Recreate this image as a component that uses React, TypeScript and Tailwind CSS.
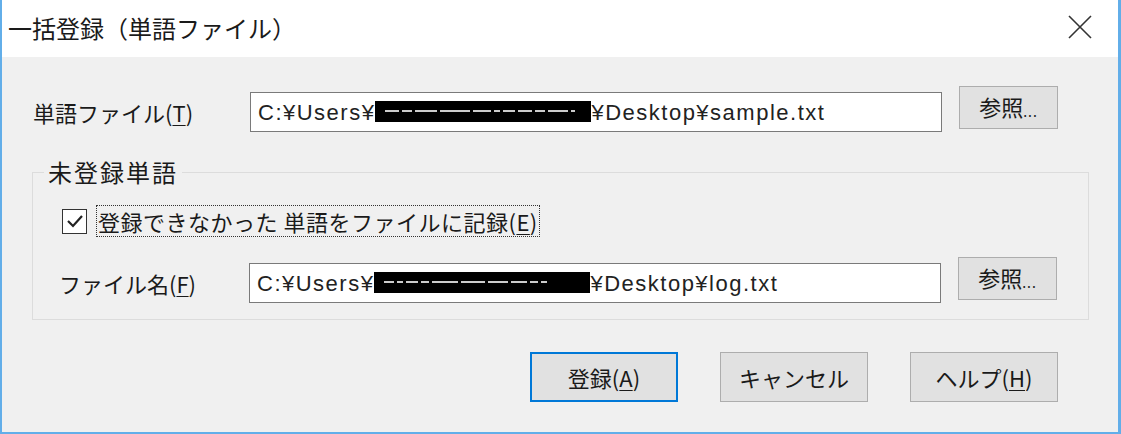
import type { ReactNode } from "react";

const jp = { fontFamily: '"Noto Sans CJK JP", "Noto Sans", sans-serif' };
const path = { fontFamily: '"Liberation Sans", Arial, sans-serif' };

// redacted user name — a black bar with faint white marks
const Redacted = ({ marks }: { marks: number[] }) => (
  <span className="inline-flex items-center gap-[3px] w-[216px] h-[21px] bg-black px-[10px] align-middle -mt-[2px]">
    {marks.map((w, i) => (
      <span key={i} className="h-[2px] bg-white/80" style={{ width: w }} />
    ))}
  </span>
);

const Mn = ({ children }: { children: ReactNode }) => (
  <span className="underline underline-offset-[3px] decoration-1">{children}</span>
);

const PathInput = ({ tail, marks }: { tail: string; marks: number[] }) => (
  <div
    className="w-[692px] h-[40px] mt-[6px] bg-white border border-[#7a7a7a] flex items-center pl-[7px] text-[22px] tracking-[1.5px] text-[#222] whitespace-nowrap overflow-hidden"
    style={path}
  >
    C:¥Users¥
    <Redacted marks={marks} />
    {tail}
  </div>
);

const BrowseButton = () => (
  <button className="w-[99px] h-[43px] ml-[17px] bg-[#e1e1e1] border border-[#adadad] text-[22px] text-[#1a1a1a] flex items-center justify-center pb-[2px]">
    参照<span className="text-[14px] tracking-[1px] mt-[10px]">...</span>
  </button>
);

const DialogButton = ({ children, primary }: { children: ReactNode; primary?: boolean }) => (
  <button
    className={`w-[148px] h-[50px] bg-[#e1e1e1] text-[22px] text-[#1a1a1a] flex items-center justify-center ${
      primary ? "border-2 border-[#0078d7]" : "border border-[#adadad]"
    }`}
  >
    {children}
  </button>
);

export default function App() {
  return (
    <div
      className="w-[1121px] h-[434px] flex flex-col bg-[#f0f0f0] border-l-2 border-r-[3px] border-b-2 border-[#62aee9]"
      style={jp}
    >
      {/* Title bar */}
      <div className="h-[57px] bg-white flex items-center justify-between pl-[6px] pr-[26px]">
        <span className="text-[24px] text-[#1a1a1a] -mt-[2px]">一括登録（単語ファイル）</span>
        <svg width="24" height="24" viewBox="0 0 24 24" className="-mt-[4px]">
          <path d="M1 1 L23 23 M23 1 L1 23" stroke="#333" strokeWidth="1.6" />
        </svg>
      </div>

      {/* Body */}
      <div className="flex-1 flex flex-col pl-[30px] pr-[29px]">
        {/* Word file row */}
        <div className="flex items-start mt-[29px]">
          <div className="w-[218px] h-[40px] mt-[6px] flex items-center pl-[1px] text-[22px] text-[#1a1a1a]">
            単語ファイル(<Mn>T</Mn>)
          </div>
          <PathInput tail="¥Desktop¥sample.txt" marks={[14, 10, 22, 30, 18, 6, 12, 14, 10, 20, 4]} />
          <BrowseButton />
        </div>

        {/* Unregistered words group */}
        <fieldset className="mt-[25px] w-[1057px] h-[163px] border border-[#dcdcdc]">
          <legend className="ml-[11px] px-[4px] text-[24px] leading-[30px] tracking-[2px] text-[#1a1a1a]">
            未登録単語
          </legend>

          <div className="flex items-center mt-[18px] pl-[29px] h-[32px]">
            <span className="w-[25px] h-[25px] bg-white border border-[#333] flex items-center justify-center">
              <svg width="20" height="20" viewBox="0 0 20 20">
                <path d="M3 10 L8 15 L17 5" stroke="#222" strokeWidth="2.2" fill="none" />
              </svg>
            </span>
            <span className="ml-[9px] h-[32px] px-[1px] border border-dotted border-[#333] flex items-center text-[22px] tracking-[0.5px] text-[#1a1a1a] whitespace-nowrap">
              登録できなかった 単語をファイルに記録(<Mn>E</Mn>)
            </span>
          </div>

          <div className="flex items-start mt-[20px] pl-[26px]">
            <div className="w-[190px] h-[40px] mt-[6px] flex items-center text-[22px] text-[#1a1a1a]">
              ファイル名(<Mn>F</Mn>)
            </div>
            <PathInput tail="¥Desktop¥log.txt" marks={[10, 6, 12, 8, 26, 24, 20, 16, 8, 6]} />
            <BrowseButton />
          </div>
        </fieldset>

        {/* Dialog buttons */}
        <div className="flex justify-end gap-[42px] mt-[32px] mr-[31px]">
          <DialogButton primary>
            登録(<Mn>A</Mn>)
          </DialogButton>
          <DialogButton>キャンセル</DialogButton>
          <DialogButton>
            ヘルプ(<Mn>H</Mn>)
          </DialogButton>
        </div>
      </div>
    </div>
  );
}
